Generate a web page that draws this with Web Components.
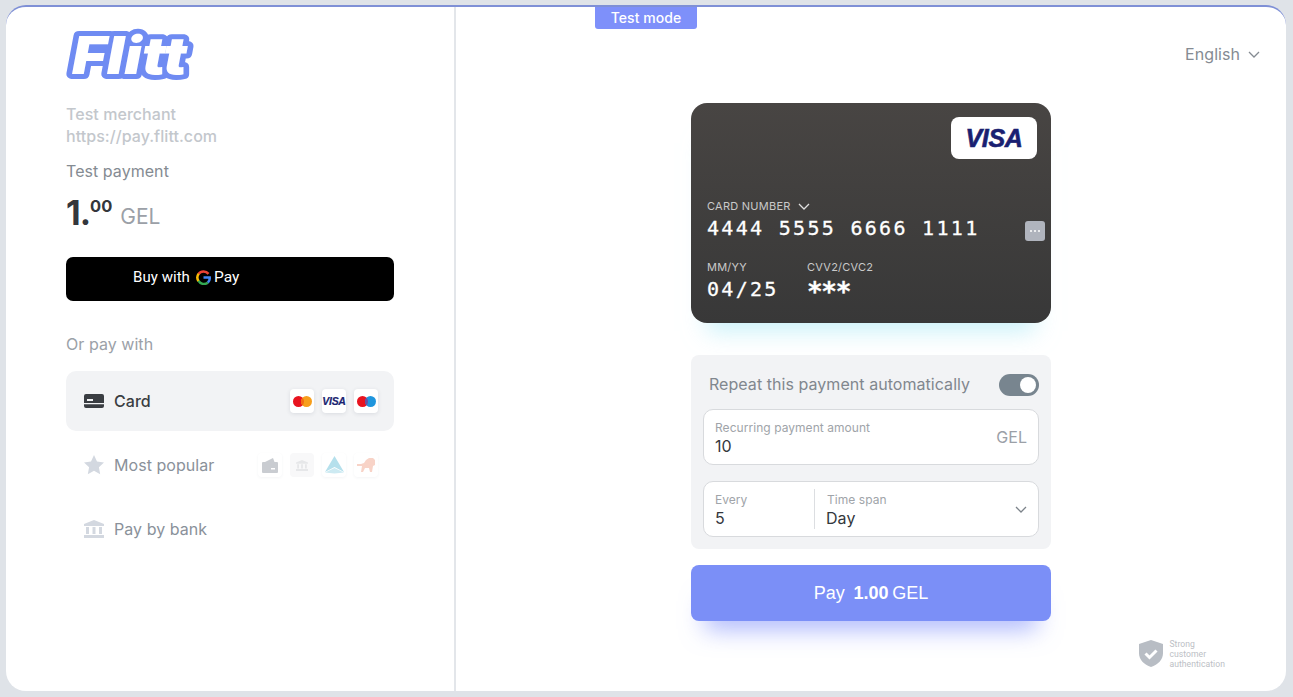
<!DOCTYPE html>
<html lang="en">
<head>
<meta charset="utf-8">
<title>Flitt checkout</title>
<style>
  html, body { margin: 0; height: 100%; background: #dfe3e8; overflow: hidden; }
  body { font-family: Inter, "Liberation Sans", sans-serif; letter-spacing: .05px; }
</style>
</head>
<body>
<pay-app></pay-app>

<script>
const VISA_CHIP = `<span style="font:italic 700 10.5px 'Liberation Sans',sans-serif;color:#1a1f71;letter-spacing:-.3px;-webkit-text-stroke:.2px #1a1f71">VISA</span>`;
const ICONS = {
    card: `<svg width="20" height="14" viewBox="0 0 20 14"><path fill="#3a3d42" fill-rule="evenodd" d="M2 0h16a2 2 0 0 1 2 2v10a2 2 0 0 1-2 2H2a2 2 0 0 1-2-2V2a2 2 0 0 1 2-2zm1 5v2h6V5zM0 9v1.300h20V9z"/></svg>`,
    star: `<svg width="20" height="20" viewBox="0 0 20 20"><path fill="#d3d8e0" d="M10 0l3 6.500 7 .9-5.100 4.800 1.300 7L10 15.800 3.800 19.200l1.300-7L0 7.400l7-.9z"/></svg>`,
    bank: `<svg width="20" height="18" viewBox="0 0 20 18"><path fill="#d3d8e0" d="M10 0l10 4v2H0V4zM2 7h3v7H2zm6.500 0h3v7h-3zM15 7h3v7h-3zM0 15h20v3H0z"/></svg>`,
    chevron: `<svg width="12" height="7" viewBox="0 0 12 7"><path fill="none" stroke="currentColor" stroke-width="1.300" d="M1 1l5 5 5-5"/></svg>`,
    mastercard: `<svg width="19" height="11" viewBox="0 0 19 11"><circle cx="5.500" cy="5.500" r="5.500" fill="#e8131f"/><circle cx="13.500" cy="5.500" r="5.500" fill="#f79e1b"/><path fill="#f26a12" d="M9.500 1.700a5.500 5.500 0 0 1 0 7.600 5.500 5.500 0 0 1 0-7.600z"/></svg>`,
    maestro: `<svg width="19" height="11" viewBox="0 0 19 11"><circle cx="5.500" cy="5.500" r="5.500" fill="#e8131f"/><circle cx="13.500" cy="5.500" r="5.500" fill="#1f95dd"/><path fill="#6b4fa0" d="M9.500 1.700a5.500 5.500 0 0 1 0 7.600 5.500 5.500 0 0 1 0-7.600z"/></svg>`,
    wallet: `<svg width="16" height="15" viewBox="0 0 16 15"><path fill="#c9ccd1" d="M3 4l8-4 1.500 4H15a1 1 0 0 1 1 1v9a1 1 0 0 1-1 1H1a1 1 0 0 1-1-1V5a1 1 0 0 1 1-1zm6 6v1.500h4V10z"/></svg>`,
    bankSmall: `<svg width="12" height="11" viewBox="0 0 20 18"><path fill="#e6e7e9" d="M10 0l10 4v2H0V4zM2 7h3v7H2zm6.500 0h3v7h-3zM15 7h3v7h-3zM0 15h20v3H0z"/></svg>`,
    prism: `<svg width="19" height="18" viewBox="0 0 19 18"><path fill="#b5e0ec" d="M9.500 0L19 16 9.500 11 0 16z"/><path fill="#cdeaf2" d="M0 16.600L9.500 12l9.500 4.600-9.500 1z"/></svg>`,
    lion: `<svg width="18" height="14" viewBox="0 0 18 14"><path fill="#f8d3c7" d="M18 2v5l-2 1-1 6h-2l-1-4H8l-2 4H4l1-6H0V6h4l3-1 2-3 3-2h4z"/></svg>`
};

class PayApp extends HTMLElement {
    constructor() {
        super();
        this.attachShadow({ mode: 'open' });
    }

    connectedCallback() {
        this.shadowRoot.innerHTML = `
            <style>
                :host {
                    display: flex;
                    position: relative;
                    box-sizing: border-box;
                    margin: 5px 7px 0 6px;
                    height: 686px;
                    background: #fff;
                    border-top: 2px solid #7f90d6;
                    border-radius: 20px;
                    overflow: hidden;
                }
                .badge {
                    position: absolute;
                    top: -2px;
                    left: 589px;
                    box-sizing: border-box;
                    width: 102px;
                    height: 24px;
                    padding-top: 1px;
                    background: #7e90fa;
                    border-radius: 0 0 3px 3px;
                    color: #fff;
                    font: 500 14px/24px Inter, sans-serif;
                    text-align: center;
                }
            </style>
            <brand-panel></brand-panel>
            <checkout-panel></checkout-panel>
            <div class="badge">Test mode</div>
        `;
    }
}

class BrandPanel extends HTMLElement {
    constructor() {
        super();
        this.attachShadow({ mode: 'open' });
    }

    connectedCallback() {
        this.shadowRoot.innerHTML = `
            <style>
                :host {
                    display: flex;
                    flex-direction: column;
                    box-sizing: border-box;
                    width: 450px;
                    padding: 21px 60px 0;
                    border-right: 2px solid #e3e6ea;
                    font: 16px/22px Inter, sans-serif;
                }
                .logo { display: block; width: 130px; height: 52px; margin-bottom: 23px; overflow: visible; }
                .logo text {
                    font: italic 900 52px Inter, sans-serif;
                    fill: #fff;
                    stroke: #6f8bf2;
                    stroke-width: 10px;
                    stroke-linejoin: round;
                    paint-order: stroke fill;
                }
                .merchant { color: #c3c7cc; font-weight: 500; }
                .purpose { color: #858b92; margin-top: 13px; }
                .amount {
                    display: flex;
                    align-items: flex-start;
                    height: 36px;
                    margin-top: 13px;
                    color: #34373c;
                    font: 700 34px/36px Inter, sans-serif;
                    letter-spacing: -1px;
                }
                .amount sup { font-size: 16.500px; line-height: 22px; letter-spacing: 0; }
                .amount span {
                    align-self: flex-end;
                    margin-left: 8px;
                    color: #9ba0a7;
                    font: 400 21px/28px Inter, sans-serif;
                    letter-spacing: 0;
                }
                .gpay {
                    display: flex;
                    align-items: center;
                    box-sizing: border-box;
                    height: 44px;
                    margin-top: 26px;
                    padding: 0 0 4px 67px;
                    background: #000;
                    border-radius: 7px;
                    color: #fff;
                    font: 15px/20px Roboto, sans-serif;
                }
                .gpay svg { margin: 0 3px 0 6px; }
                .gpay b { font: 400 15.500px/20px Roboto, sans-serif; }
                .or { margin: 32px 0 16px; color: #9ba1a8; }
                .methods { display: flex; flex-direction: column; gap: 4px; }
                .chip {
                    display: flex;
                    align-items: center;
                    justify-content: center;
                    width: 24px;
                    height: 24px;
                    background: #fff;
                    border-radius: 4px;
                    box-shadow: 0 1px 4px rgba(40, 50, 70, .12);
                }
                .faded .chip { box-shadow: 0 1px 3px rgba(40, 50, 70, .05); }
                .faded .chip.grey { background: #f8f8f9; box-shadow: none; }
            </style>
            <svg class="logo" viewBox="0 0 130 52"><text x="6" y="46" textLength="115" lengthAdjust="spacingAndGlyphs">Flitt</text></svg>
            <div class="merchant">Test merchant<br>https://pay.flitt.com</div>
            <div class="purpose">Test payment</div>
            <div class="amount">1.<sup>00</sup><span>GEL</span></div>
            <div class="gpay">Buy with
                <svg width="15" height="15" viewBox="0 0 24 24" fill="none" stroke-width="4">
                    <path stroke="#ea4335" d="M20 6.200A10 10 0 0 0 4 6.500"/>
                    <path stroke="#fbbc04" d="M4.300 6A10 10 0 0 0 4.300 18"/>
                    <path stroke="#34a853" d="M4 17.500A10 10 0 0 0 19 20"/>
                    <path stroke="#4285f4" d="M19 20a10 10 0 0 0 3-8H12"/>
                </svg><b>Pay</b></div>
            <div class="or">Or pay with</div>
            <div class="methods">
                <method-row active>
                    <span slot="icon">${ICONS.card}</span>Card
                    <div slot="chips" class="chip">${ICONS.mastercard}</div>
                    <div slot="chips" class="chip">${VISA_CHIP}</div>
                    <div slot="chips" class="chip">${ICONS.maestro}</div>
                </method-row>
                <method-row class="faded">
                    <span slot="icon">${ICONS.star}</span>Most popular
                    <div slot="chips" class="chip">${ICONS.wallet}</div>
                    <div slot="chips" class="chip grey">${ICONS.bankSmall}</div>
                    <div slot="chips" class="chip">${ICONS.prism}</div>
                    <div slot="chips" class="chip">${ICONS.lion}</div>
                </method-row>
                <method-row>
                    <span slot="icon">${ICONS.bank}</span>Pay by bank
                </method-row>
            </div>
        `;
    }
}

class MethodRow extends HTMLElement {
    constructor() {
        super();
        this.attachShadow({ mode: 'open' });
    }

    connectedCallback() {
        this.shadowRoot.innerHTML = `
            <style>
                :host {
                    display: flex;
                    align-items: center;
                    height: 60px;
                    padding: 0 16px 0 18px;
                    border-radius: 10px;
                    color: #8a919a;
                    font: 16px/22px Inter, sans-serif;
                }
                :host([active]) {
                    background: #f2f3f5;
                    color: #3a3d42;
                    font-weight: 500;
                }
                .icon { display: flex; justify-content: center; width: 20px; margin-right: 10px; }
                ::slotted(span) { display: flex; }
                .label { flex: 1; }
                .chips { display: flex; gap: 8px; }
            </style>
            <div class="icon"><slot name="icon"></slot></div>
            <div class="label"><slot></slot></div>
            <div class="chips"><slot name="chips"></slot></div>
        `;
    }
}

class CheckoutPanel extends HTMLElement {
    constructor() {
        super();
        this.attachShadow({ mode: 'open' });
    }

    connectedCallback() {
        this.shadowRoot.innerHTML = `
            <style>
                :host {
                    display: flex;
                    flex: 1;
                    flex-direction: column;
                    align-items: center;
                    font: 16px/22px Inter, sans-serif;
                }
                .lang {
                    display: flex;
                    align-items: center;
                    align-self: flex-end;
                    gap: 8px;
                    margin: 36px 26px 38px 0;
                    color: #858b92;
                }
                .lang svg { display: block; }
                .stack { display: flex; flex-direction: column; width: 360px; }
                .pay {
                    height: 56px;
                    margin-top: 16px;
                    background: #7b8ff7;
                    border-radius: 8px;
                    box-shadow: 0 22px 24px -14px rgba(100, 120, 250, .55);
                    color: #fff;
                    font: 18px/56px "Liberation Sans", sans-serif;
                    text-align: center;
                }
                .pay b { margin: 0 -1.500px; }
                .sca {
                    display: flex;
                    align-items: center;
                    gap: 6px;
                    align-self: flex-end;
                    margin: auto 61px 22px 0;
                    color: #bcc0c5;
                    font: 8.600px/10px Roboto, sans-serif;
                }
                .sca svg { margin-bottom: 2px; }
            </style>
            <div class="lang">English ${ICONS.chevron}</div>
            <div class="stack">
                <card-preview></card-preview>
                <recurring-box></recurring-box>
                <div class="pay">Pay <b>&nbsp;1.00</b> GEL</div>
            </div>
            <div class="sca">
                <svg width="24" height="27" viewBox="0 0 24 27">
                    <path fill="#b8bdc4" d="M12 0l12 4v9c0 7-5 11.500-12 14C5 24.500 0 20 0 13V4z"/>
                    <path fill="none" stroke="#fff" stroke-width="3" d="M6.500 13.500l4 4 7-7"/>
                </svg>
                <div>Strong<br>customer<br>authentication</div>
            </div>
        `;
    }
}

class CardPreview extends HTMLElement {
    constructor() {
        super();
        this.attachShadow({ mode: 'open' });
    }

    connectedCallback() {
        this.shadowRoot.innerHTML = `
            <style>
                :host {
                    display: flex;
                    flex-direction: column;
                    box-sizing: border-box;
                    height: 220px;
                    padding: 14px 6px 0 16px;
                    background: linear-gradient(#484543, #383838);
                    border-radius: 16px;
                    box-shadow: 0 24px 22px -16px rgba(165, 232, 245, .6);
                    color: #fff;
                }
                .visa {
                    display: flex;
                    align-items: center;
                    justify-content: center;
                    align-self: flex-end;
                    width: 86px;
                    height: 42px;
                    margin-right: 8px;
                    background: #fff;
                    border-radius: 8px;
                    color: #1a1f71;
                    font: italic 700 25px/30px "Liberation Sans", sans-serif;
                    letter-spacing: -.3px;
                    -webkit-text-stroke: .6px #1a1f71;
                }
                .label {
                    display: flex;
                    align-items: center;
                    gap: 7px;
                    color: #c9c9c9;
                    font: 11px/14px Inter, sans-serif;
                    letter-spacing: .25px;
                }
                .number-label { margin-top: 40px; }
                .number {
                    display: flex;
                    align-items: center;
                    justify-content: space-between;
                    height: 30px;
                }
                .digits {
                    font: 20px/30px "DejaVu Sans Mono", monospace;
                    letter-spacing: 2.300px;
                    white-space: pre;
                    -webkit-text-stroke: .3px #fff;
                }
                .scan {
                    display: flex;
                    align-items: center;
                    justify-content: center;
                    width: 20px;
                    height: 20px;
                    margin-top: 6px;
                    background: #b0b4bd;
                    border-radius: 3px;
                }
                .scan i { width: 2px; height: 2px; margin: 0 1px; background: #fff; border-radius: 50%; }
                .bottom { display: flex; gap: 30px; margin-top: 17px; }
                .col { width: 70px; }
                .col + .col { width: auto; }
                .col .digits { display: block; }
                .col .stars { margin-top: 3px; font: 700 26px/30px "DejaVu Sans Mono", monospace; letter-spacing: -1.300px; }
            </style>
            <div class="visa">VISA</div>
            <div class="label number-label">CARD NUMBER
                <svg width="12" height="7" viewBox="0 0 12 7"><path fill="none" stroke="#e0e0e0" stroke-width="1.300" d="M1 1l5 5 5-5"/></svg>
            </div>
            <div class="number">
                <span class="digits">4444 5555 6666 1111</span>
                <span class="scan"><i></i><i></i><i></i></span>
            </div>
            <div class="bottom">
                <div class="col"><div class="label">MM/YY</div><span class="digits">04/25</span></div>
                <div class="col"><div class="label">CVV2/CVC2</div><span class="digits stars">***</span></div>
            </div>
        `;
    }
}

class RecurringBox extends HTMLElement {
    constructor() {
        super();
        this.attachShadow({ mode: 'open' });
    }

    connectedCallback() {
        this.shadowRoot.innerHTML = `
            <style>
                :host {
                    display: flex;
                    flex-direction: column;
                    margin-top: 32px;
                    padding: 12px;
                    background: #f2f3f5;
                    border-radius: 8px;
                    font: 16px/22px Inter, sans-serif;
                }
                .head {
                    display: flex;
                    align-items: center;
                    justify-content: space-between;
                    height: 36px;
                    margin-bottom: 6px;
                    padding-left: 6px;
                    color: #81878e;
                }
                .title { margin-top: -2px; }
                .toggle {
                    display: flex;
                    align-items: center;
                    justify-content: flex-end;
                    box-sizing: border-box;
                    width: 40px;
                    height: 22px;
                    padding-right: 3px;
                    background: #78858f;
                    border-radius: 11px;
                }
                .toggle i { width: 16px; height: 16px; background: #fff; border-radius: 50%; }
                .field {
                    display: flex;
                    align-items: center;
                    box-sizing: border-box;
                    height: 56px;
                    padding: 0 11px 0 11px;
                    background: #fff;
                    border: 1px solid #d8dadd;
                    border-radius: 10px;
                }
                .field + .field { margin-top: 16px; }
                .cell { display: flex; flex-direction: column; padding-top: 3px; }
                .cell.grow { flex: 1; }
                .cell label { color: #a0a4a9; font: 12px/15px Inter, sans-serif; }
                .cell span { margin-top: 1px; color: #34373c; font: 16px/21px Inter, sans-serif; }
                .suffix { color: #9ba0a7; }
                .sep { align-self: center; width: 1px; height: 40px; margin: 0 12px 0 0; background: #dcdee1; }
                .every { width: 99px; }
                .day { margin-left: -1px; }
                .chev { color: #7c838a; }
                .chev svg { display: block; }
            </style>
            <div class="head"><span class="title">Repeat this payment automatically</span> <div class="toggle"><i></i></div></div>
            <div class="field">
                <div class="cell grow"><label>Recurring payment amount</label><span>10</span></div>
                <div class="suffix">GEL</div>
            </div>
            <div class="field">
                <div class="cell every"><label>Every</label><span>5</span></div>
                <div class="sep"></div>
                <div class="cell grow"><label>Time span</label><span class="day">Day</span></div>
                <div class="chev">${ICONS.chevron}</div>
            </div>
        `;
    }
}

customElements.define('method-row', MethodRow);
customElements.define('card-preview', CardPreview);
customElements.define('recurring-box', RecurringBox);
customElements.define('brand-panel', BrandPanel);
customElements.define('checkout-panel', CheckoutPanel);
customElements.define('pay-app', PayApp);
</script>
</body>
</html>
